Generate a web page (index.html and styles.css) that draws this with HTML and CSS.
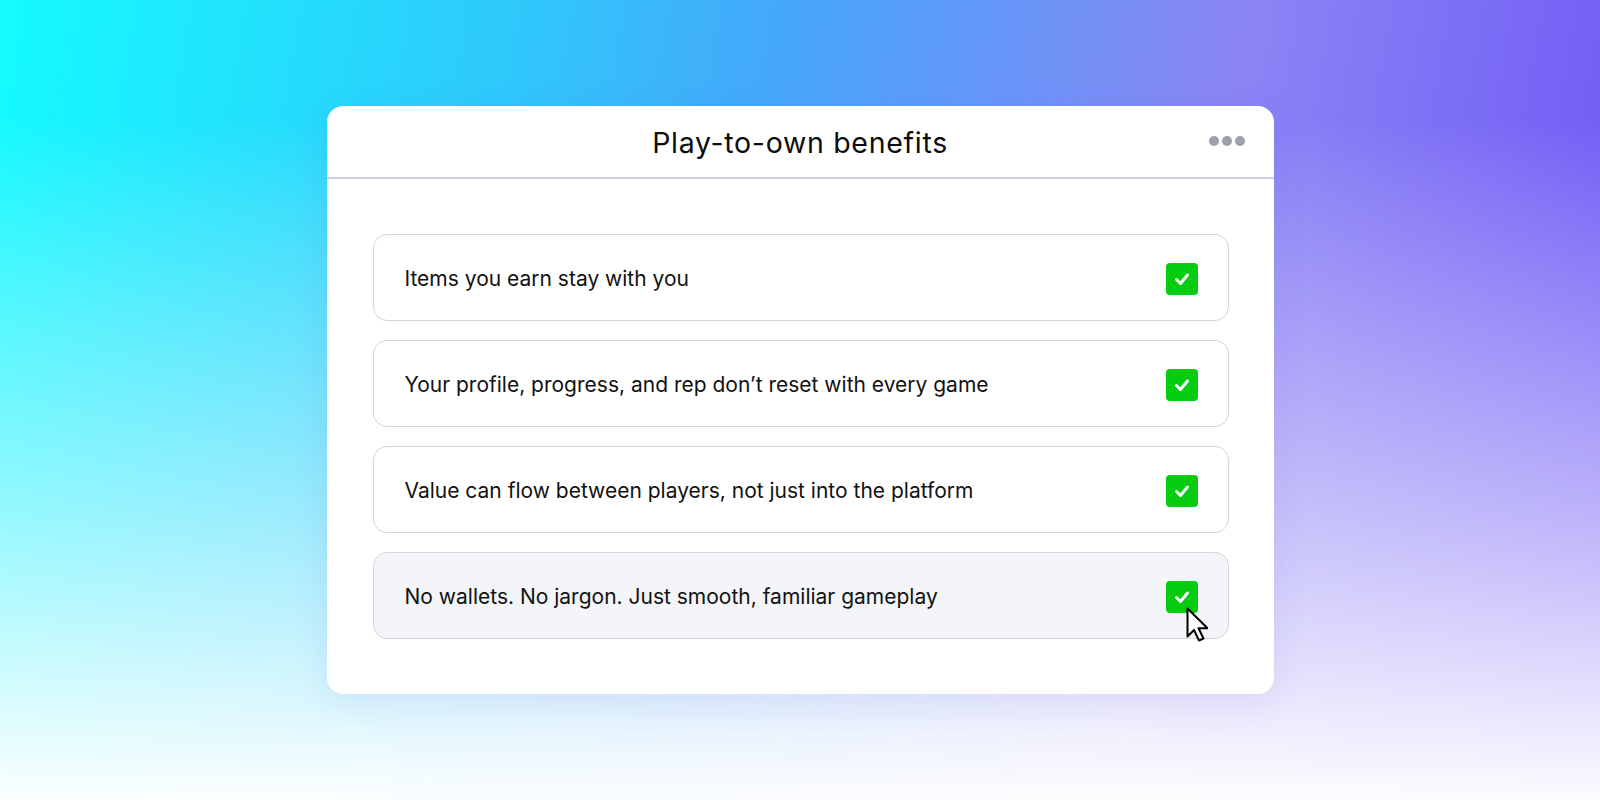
FILE: index.html
```html
<!DOCTYPE html>
<html lang="en">

<head>
    <meta charset="UTF-8">
    <meta name="viewport" content="width=device-width, initial-scale=1.0">
    <title>Play-to-own benefits</title>
    <link rel="stylesheet" href="styles.css">
</head>

<body>
    <div class="stage">
        <div class="card">
            <div class="card-head">
                <h1 class="card-title">Play-to-own benefits</h1>
                <div class="dots">
                    <span></span><span></span><span></span>
                </div>
            </div>
            <ul class="list">
                <li class="item">
                    <span class="item-text">Items you earn stay with you</span>
                    <span class="check">
                        <svg viewBox="0 0 32 32" width="32" height="32"><path d="M10.5 16.5l4 4 7-8.5" fill="none" stroke="#fff" stroke-width="3" stroke-linecap="round" stroke-linejoin="round"/></svg>
                    </span>
                </li>
                <li class="item">
                    <span class="item-text">Your profile, progress, and rep don’t reset with every game</span>
                    <span class="check">
                        <svg viewBox="0 0 32 32" width="32" height="32"><path d="M10.5 16.5l4 4 7-8.5" fill="none" stroke="#fff" stroke-width="3" stroke-linecap="round" stroke-linejoin="round"/></svg>
                    </span>
                </li>
                <li class="item">
                    <span class="item-text">Value can flow between players, not just into the platform</span>
                    <span class="check">
                        <svg viewBox="0 0 32 32" width="32" height="32"><path d="M10.5 16.5l4 4 7-8.5" fill="none" stroke="#fff" stroke-width="3" stroke-linecap="round" stroke-linejoin="round"/></svg>
                    </span>
                </li>
                <li class="item item-hover">
                    <span class="item-text">No wallets. No jargon. Just smooth, familiar gameplay</span>
                    <span class="check">
                        <svg viewBox="0 0 32 32" width="32" height="32"><path d="M10.5 16.5l4 4 7-8.5" fill="none" stroke="#fff" stroke-width="3" stroke-linecap="round" stroke-linejoin="round"/></svg>
                        <!-- mouse pointer over the last checkbox -->
                        <svg class="cursor" viewBox="0 0 22 35" width="22" height="35"><path d="M1.5 1.5v28l6.5-6.5 5 10.5 4.5-2-5-10.3h9z" fill="#fff" stroke="#000" stroke-width="2" stroke-linejoin="round"/></svg>
                    </span>
                </li>
            </ul>
        </div>
    </div>
</body>

</html>
```

FILE: styles.css
```css
* {
    margin: 0;
    padding: 0;
    box-sizing: border-box;
}

body {
    width: 1600px;
    height: 800px;
    overflow: hidden;
    font-family: Inter, "Noto Sans", sans-serif;
    color: #111;
    background:
        linear-gradient(180deg, rgba(255, 255, 255, 0) 15%, rgba(255, 255, 255, 0.55) 65%, rgba(255, 255, 255, 0.98) 100%),
        linear-gradient(100deg, #14fbff 0%, #2fc8fb 30%, #45a8fa 45%, #8c84f5 72%, #6a54f6 100%);
}

.stage {
    height: 800px;
    display: flex;
    align-items: center;
    justify-content: center;
}

.card {
    width: 947px;
    height: 588px;
    background-color: #fff;
    border-radius: 16px;
    box-shadow: 0 8px 34px rgba(90, 80, 200, 0.1);
    overflow: hidden;
}

/* 标题栏 */
.card-head {
    position: relative;
    height: 73px;
    display: flex;
    align-items: center;
    justify-content: center;
    border-bottom: 2px solid #cfcde2;
}

.card-title {
    font-size: 28.5px;
    font-weight: 400;
    letter-spacing: 0.7px;
    color: #0d0d0d;
    margin-top: 2px;
}

.dots {
    position: absolute;
    right: 29px;
    top: 30px;
    display: flex;
    gap: 3px;
}

.dots span {
    width: 10px;
    height: 10px;
    border-radius: 50%;
    background-color: #9ca0ac;
}

/* 列表 */
.list {
    list-style: none;
    display: flex;
    flex-direction: column;
    gap: 19px;
    padding: 55px 45px 0 46px;
}

.item {
    height: 87px;
    display: flex;
    align-items: center;
    justify-content: space-between;
    padding: 0 30px 0 31px;
    border: 1px solid #d3d5db;
    border-radius: 14px;
}

.item-hover {
    background-color: #f3f5f8;
}

.item-text {
    font-size: 21px;
    letter-spacing: 0;
    color: #121212;
    margin-top: 2px;
}

.check {
    position: relative;
    width: 32px;
    height: 32px;
    border-radius: 4px;
    background-color: #06cc10;
    margin-top: 2px;
}

.check svg {
    display: block;
}

.cursor {
    position: absolute;
    left: 20px;
    top: 26px;
}
```
